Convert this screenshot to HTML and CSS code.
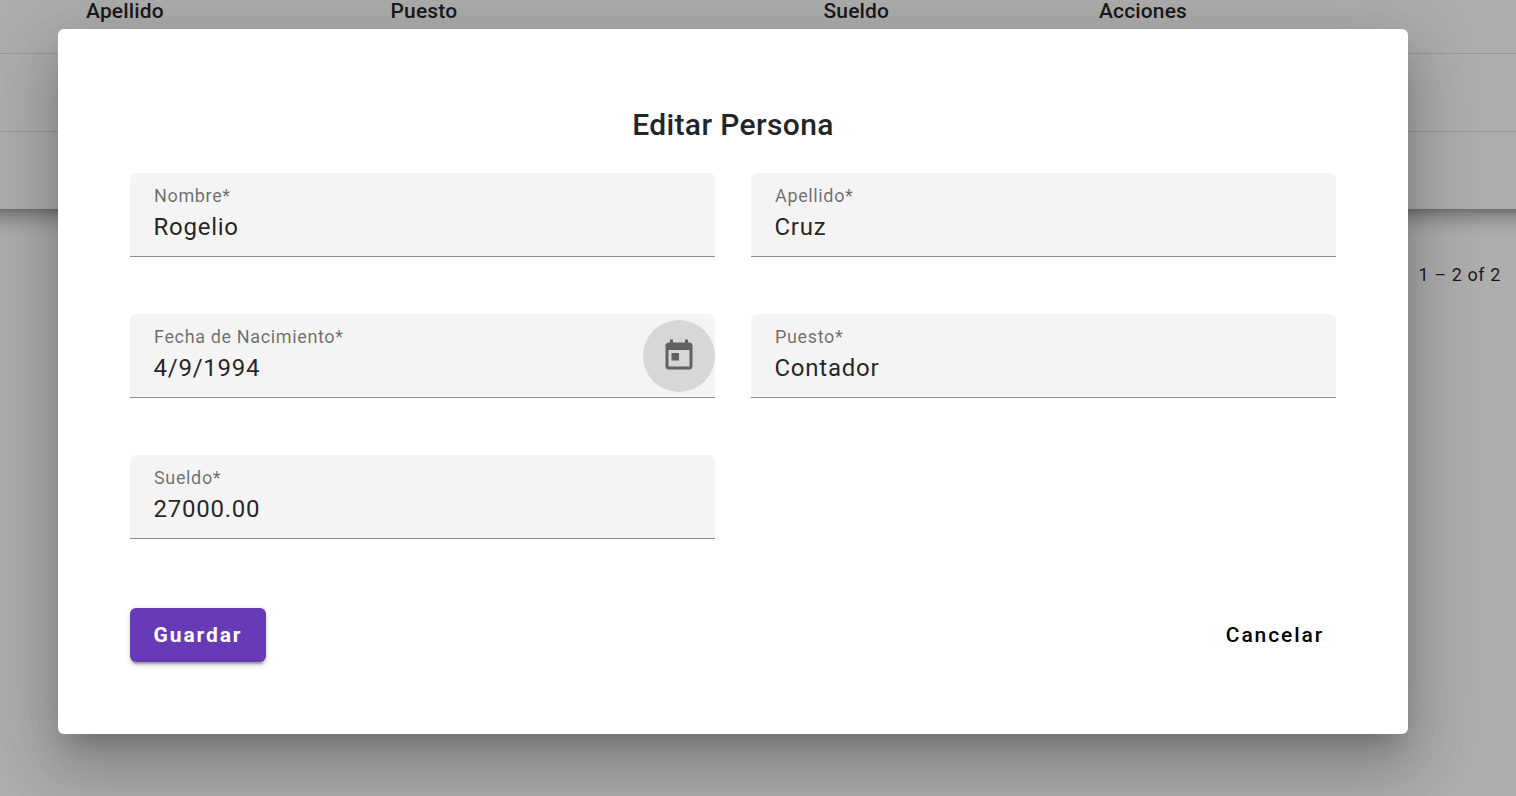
FILE: index.html
```html
<!DOCTYPE html>
<html lang="es">
<head>
<meta charset="utf-8">
<title>Editar Persona</title>
<link rel="stylesheet" href="styles.css">
</head>
<body>
<main class="page">
  <section class="table">
    <div class="row header"><span>Apellido</span><span>Puesto</span><span>Sueldo</span><span>Acciones</span></div>
    <div class="row"></div>
    <div class="row last"></div>
  </section>
  <div class="paginator">1 – 2 of 2</div>
</main>
<div class="backdrop">
  <form class="dialog">
    <h1 class="title">Editar Persona</h1>
    <div class="grid">
      <div class="field"><span class="label">Nombre*</span><span class="value">Rogelio</span></div>
      <div class="field"><span class="label">Apellido*</span><span class="value">Cruz</span></div>
      <div class="field"><span class="label">Fecha de Nacimiento*</span><span class="value">4/9/1994</span>
        <button type="button" class="toggle" aria-label="Calendario"><svg viewBox="0 0 24 24" width="36" height="36"><path fill="currentColor" d="M19 3h-1V1h-2v2H8V1H6v2H5c-1.11 0-1.99.9-1.99 2L3 19c0 1.1.89 2 2 2h14c1.1 0 2-.9 2-2V5c0-1.1-.9-2-2-2zm0 16H5V8h14v11zM7 10h5v5H7z"/></svg></button>
      </div>
      <div class="field"><span class="label">Puesto*</span><span class="value">Contador</span></div>
      <div class="field"><span class="label">Sueldo*</span><span class="value">27000.00</span></div>
    </div>
    <div class="actions">
      <button type="button" class="btn primary">Guardar</button>
      <button type="button" class="btn">Cancelar</button>
    </div>
  </form>
</div>
</body>
</html>
```
FILE: styles.css
```css
* { box-sizing: border-box; }
body { margin: 0; height: 796px; overflow: hidden; background: #fff; font-family: Roboto, sans-serif; color: rgba(0,0,0,.87); }
.page { height: 796px; overflow: hidden; }
.table { height: 209px; margin: 0 -36px; background: #fff; box-shadow: 0 7.5px 7.5px -4.5px rgba(0,0,0,.2), 0 12px 15px 1.5px rgba(0,0,0,.14), 0 4.5px 21px 3px rgba(0,0,0,.12); }
.row { height: 78px; border-bottom: 1px solid rgba(0,0,0,.12); }
.row.last { border-bottom: 0; }
.header { display: grid; grid-template-columns: 304.5px 433px 275.5px 1fr; height: 54px; padding-left: 122px; font-size: 21px; font-weight: 500; letter-spacing: .15px; line-height: 22px; }
.paginator { margin-top: 54px; padding-right: 15px; text-align: right; font-size: 18px; line-height: 24px; letter-spacing: .6px; }
.backdrop { position: absolute; inset: 0; padding: 29px 108px 62px 58px; background: rgba(0,0,0,.32); }
.dialog { height: 705px; padding: 72px; background: #fff; border-radius: 6px; box-shadow: 0 16.5px 22.5px -10.5px rgba(0,0,0,.2), 0 36px 57px 4.5px rgba(0,0,0,.14), 0 13.5px 69px 12px rgba(0,0,0,.12); }
.title { margin: 0 0 24px; text-align: center; font-size: 30px; font-weight: 500; line-height: 48px; letter-spacing: .38px; color: #212529; }
.grid { display: grid; grid-template-columns: 585px 585px; column-gap: 36px; row-gap: 57px; }
.field { position: relative; display: flex; flex-direction: column; height: 84px; padding: 10px 24px; background: #f4f4f4; border-bottom: 1px solid #8c8c8c; border-radius: 6px 6px 0 0; }
.label { font-size: 18px; line-height: 26px; letter-spacing: .64px; color: rgba(0,0,0,.56); }
.value { margin-left: -.5px; font-size: 24px; line-height: 36px; letter-spacing: .75px; }
.toggle { position: absolute; right: 0; top: 6px; width: 72px; height: 72px; padding: 18px; border: 0; border-radius: 50%; background: #d7d7d7; color: #616161; }
.toggle svg { display: block; }
.actions { display: flex; justify-content: space-between; margin-top: 69px; }
.btn { height: 54px; padding: 0 12px; border: 0; border-radius: 6px; background: none; color: #000; font: 500 21px Roboto, sans-serif; letter-spacing: 1.9px; }
.primary { width: 136px; background: #673ab7; color: #fff; font-weight: 700; box-shadow: 0 4.5px 1.5px -3px rgba(0,0,0,.2), 0 3px 3px rgba(0,0,0,.14), 0 1.5px 7.5px rgba(0,0,0,.12); }
```
